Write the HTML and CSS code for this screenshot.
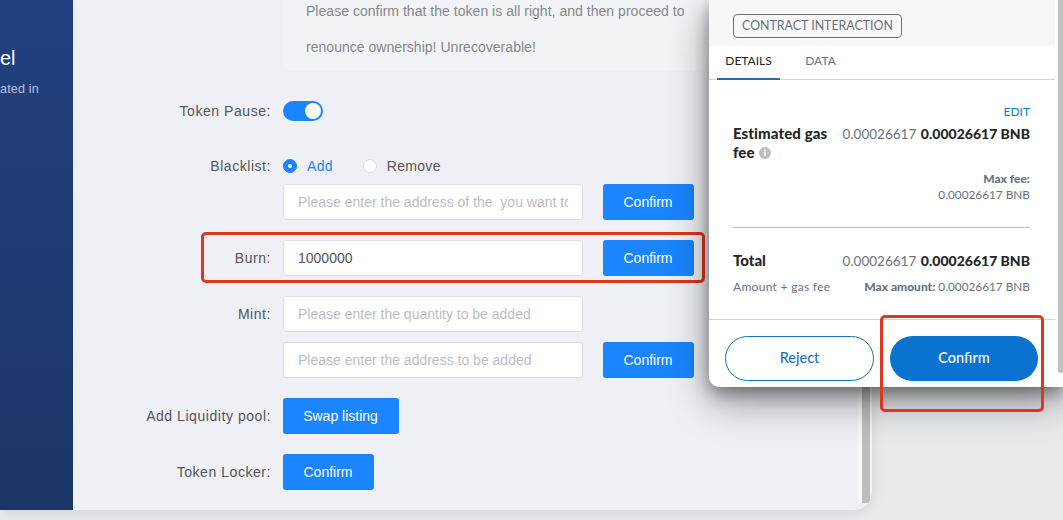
FILE: index.html
```html
<!DOCTYPE html>
<html lang="en">
<head>
<meta charset="utf-8">
<title>Token panel</title>
<link rel="stylesheet" href="styles.css">
</head>
<body>
<div class="window">
  <aside class="sidebar">
    <div class="side-title">el</div>
    <div class="side-sub">ated in</div>
  </aside>
  <main class="main">
    <div class="notice">
      <p>Please confirm that the token is all right, and then proceed to</p>
      <p>renounce ownership! Unrecoverable!</p>
    </div>
    <div class="form">
      <div class="row row-toggle">
        <span class="label">Token Pause:</span>
        <span class="switch"><span class="knob"></span></span>
      </div>
      <div class="row row-radio">
        <span class="label">Blacklist:</span>
        <span class="radio radio-on"><span class="radio-dot"></span></span>
        <span class="radio-text radio-text-on">Add</span>
        <span class="radio"></span>
        <span class="radio-text">Remove</span>
      </div>
      <div class="row row-tight">
        <span class="label"></span>
        <span class="input placeholder"><span class="clip">Please enter the address of the&nbsp; you want to</span></span>
        <button class="btn btn-side">Confirm</button>
      </div>
      <div class="row row-field">
        <span class="label">Burn:</span>
        <span class="input">1000000</span>
        <button class="btn btn-side">Confirm</button>
        <span class="mark mark-burn"></span>
      </div>
      <div class="row row-field">
        <span class="label">Mint:</span>
        <span class="input placeholder">Please enter the quantity to be added</span>
      </div>
      <div class="row row-tight">
        <span class="label"></span>
        <span class="input placeholder">Please enter the address to be added</span>
        <button class="btn btn-side">Confirm</button>
      </div>
      <div class="row row-field">
        <span class="label">Add Liquidity pool:</span>
        <button class="btn btn-swap">Swap listing</button>
      </div>
      <div class="row row-field">
        <span class="label">Token Locker:</span>
        <button class="btn btn-side">Confirm</button>
      </div>
    </div>
  </main>
  <div class="edge"></div>
</div>

<section class="popup">
  <div class="popup-body">
    <header class="popup-head">
      <span class="badge">CONTRACT INTERACTION</span>
    </header>
    <nav class="tabs">
      <span class="tab tab-active">DETAILS</span>
      <span class="tab">DATA</span>
    </nav>
    <div class="details">
      <div class="edit">EDIT</div>
      <div class="fee-row">
        <div class="fee-name">Estimated gas fee
          <svg class="info" viewBox="0 0 12 12" width="12" height="12"><circle cx="6" cy="6" r="6" fill="#bbc0c5"/><rect x="5.2" y="5" width="1.6" height="4" fill="#fff"/><rect x="5.2" y="2.8" width="1.6" height="1.5" fill="#fff"/></svg>
        </div>
        <div class="amount"><span class="fiat">0.00026617</span> <b>0.00026617 BNB</b></div>
      </div>
      <div class="max"><b>Max fee:</b><br><span class="max-value">0.00026617 BNB</span></div>
      <div class="total">
        <div class="total-row">
          <b class="total-name">Total</b>
          <div class="amount"><span class="fiat">0.00026617</span> <b>0.00026617 BNB</b></div>
        </div>
        <div class="sub-row">
          <span class="sub-left">Amount + gas fee</span>
          <span><b>Max amount:</b> <span class="max-value">0.00026617 BNB</span></span>
        </div>
      </div>
    </div>
    <footer class="actions">
      <button class="pill pill-ghost">Reject</button>
      <button class="pill pill-solid">Confirm</button>
    </footer>
  </div>
  <div class="scrollbar"></div>
</section>
<div class="mark mark-confirm"></div>
</body>
</html>
```
FILE: styles.css
```css
* { box-sizing: border-box; }
html, body { margin: 0; height: 100%; }
body {
  width: 1063px;
  height: 520px;
  overflow: hidden;
  background: #e9eaee;
  position: relative;
  font-family: "Liberation Sans", Arial, sans-serif;
}
.window {
  width: 872px;
  height: 510px;
  display: flex;
  overflow: hidden;
  background: #eff0f5;
  border-bottom-right-radius: 18px;
  box-shadow: 0 2px 14px rgba(0, 0, 0, .1);
}
.sidebar {
  width: 73px;
  flex: none;
  background: linear-gradient(180deg, #21407f 0%, #1c3567 100%);
  color: #fff;
  padding-top: 46px;
}
.side-title { font-size: 20px; line-height: 24px; }
.side-sub { font-size: 12.5px; line-height: 18px; margin-top: 10px; color: #b9c3dc; letter-spacing: .2px; }
.main {
  flex: 1;
  background: #eff0f5;
  color: #55565b;
  font-size: 14px;
  min-width: 0;
}
.notice {
  margin: -7px 0 0 210px;
  padding: 0 0 6px 23px;
  height: 78px;
  background: #f2f3f6;
  border-radius: 6px;
  color: #86878c;
  font-size: 14px;
  line-height: 36px;
  letter-spacing: .03px;
}
.notice p { margin: 0; white-space: nowrap; }
.form { display: flex; flex-direction: column; }
.row { display: flex; align-items: center; position: relative; }
.row-toggle { margin-top: 30px; height: 20px; }
.row-radio { margin-top: 35px; height: 20px; }
.row-tight { margin-top: 8px; height: 36px; }
.row-field { margin-top: 20px; height: 36px; }
.row-tight + .row-tight { margin-top: 10px; }
.row-field + .row-tight { margin-top: 10px; }
.label {
  width: 198px;
  margin-right: 12px;
  flex: none;
  text-align: right;
  letter-spacing: .55px;
  padding-bottom: 1px;
}
.switch {
  width: 40px;
  height: 20px;
  border-radius: 10px;
  background: #1a85ff;
  padding: 2px;
  display: flex;
  justify-content: flex-end;
}
.knob { width: 16px; height: 16px; border-radius: 50%; background: #fff; }
.radio {
  width: 14px;
  height: 14px;
  border-radius: 50%;
  background: #fff;
  border: 1px solid #dcdee2;
  display: flex;
  align-items: center;
  justify-content: center;
}
.radio-on { background: #1a85ff; border-color: #1a85ff; }
.radio-dot { width: 4px; height: 4px; border-radius: 50%; background: #fff; }
.radio-text { margin-left: 10px; margin-right: 30px; letter-spacing: .3px; }
.radio-text-on { color: #1a85ff; }
.input {
  width: 300px;
  height: 36px;
  flex: none;
  background: #fff;
  border: 1px solid #dddfe3;
  border-radius: 3px;
  padding: 0 14px;
  line-height: 34px;
  color: #55565b;
  white-space: nowrap;
  overflow: hidden;
}
.placeholder { color: #bdbec3; }
.clip { display: block; overflow: hidden; }
.btn {
  height: 36px;
  border: 0;
  border-radius: 3px;
  background: #1a85ff;
  color: #fff;
  font: inherit;
  padding: 0 1px 0 0;
}
.btn-side { width: 91px; }
.input + .btn { margin-left: 20px; }
.btn-swap { width: 116px; }
.edge {
  width: 14px;
  flex: none;
  margin-bottom: 7px;
  background: #bcbdbf;
  border-left: 4px solid #f8f8fa;
  border-right: 2px solid #f4f4f6;
}
.mark {
  position: absolute;
  border: 3px solid #e0351e;
  border-radius: 5px;
  pointer-events: none;
}
.mark-burn { left: 128px; top: -8px; width: 504px; height: 51px; }
.mark-confirm { left: 880px; top: 315px; width: 164px; height: 97px; }
.popup {
  position: absolute;
  left: 709px;
  top: 0;
  width: 354px;
  height: 387px;
  display: flex;
  align-items: flex-start;
  background: #fff;
  border-bottom-left-radius: 10px;
  box-shadow: 0 6px 16px rgba(0, 0, 0, .35), 0 14px 40px rgba(0, 0, 0, .4);
  font-family: "Lato", "Liberation Sans", sans-serif;
  color: #24272a;
}
.popup-body { width: 346px; height: 387px; display: flex; flex-direction: column; flex: none; }
.scrollbar {
  width: 5px;
  height: 373px;
  margin-left: 3px;
  background: #c2c2c4;
  border-bottom-left-radius: 4px;
  border-bottom-right-radius: 4px;
}
.popup-head {
  height: 46px;
  background: #f7f7f7;
  padding: 14px 0 0 24px;
}
.badge {
  display: inline-block;
  height: 24px;
  width: 169px;
  border: 1px solid #6a737d;
  border-radius: 4px;
  font-size: 12.4px;
  line-height: 22px;
  text-align: center;
  color: #6a737d;
  white-space: nowrap;
}
.tabs {
  height: 34px;
  display: flex;
  padding-left: 8px;
  border-bottom: 1px solid #d2d3d4;
  font-size: 12px;
}
.tab {
  width: 63px;
  margin-right: 9px;
  text-align: center;
  line-height: 30px;
  color: #6a737d;
}
.tab-active { color: #24272a; border-bottom: 2px solid #2a6cab; height: 34px; }
.details { flex: 1; padding: 24px 25px 0 24px; }
.edit { text-align: right; font-size: 12px; line-height: 16px; color: #037dd6; }
.fee-row { display: flex; justify-content: space-between; margin-top: 4px; }
.fee-name { width: 104px; font-size: 15px; line-height: 19px; font-weight: 900; letter-spacing: .1px; }
.info { vertical-align: -1px; margin-left: 1px; }
.amount { font-size: 14px; line-height: 19px; white-space: nowrap; }
.amount b { font-weight: 900; }
.fiat { color: #6a737d; margin-right: 1px; font-size: 13.5px; }
.max { margin-top: 9px; text-align: right; font-size: 12px; line-height: 16px; color: #6a737d; }
.max b, .sub-row b { font-weight: 900; }
.max-value { font-size: 11.8px; }
.total { margin-top: 24px; border-top: 1px solid #bbb; padding-top: 23px; }
.total-row { display: flex; justify-content: space-between; }
.total-name { font-size: 15px; line-height: 19px; font-weight: 900; }
.sub-row {
  margin-top: 8px;
  display: flex;
  justify-content: space-between;
  font-size: 12px;
  line-height: 16px;
  color: #6a737d;
}
.sub-left { letter-spacing: .3px; }
.actions {
  height: 68px;
  border-top: 1px solid #d2d3d4;
  padding: 16px 0 0 16px;
  display: flex;
  gap: 16px;
}
.pill {
  width: 149px;
  height: 45px;
  padding: 0 0 2px;
  border-radius: 23px;
  font: inherit;
  font-size: 14.5px;
  font-weight: 500;
}
.pill-ghost { background: #fff; border: 1px solid #1a6fb5; color: #1f72bd; }
.pill-solid { width: 148px; background: #0a72cf; border: 0; color: #fff; }
```
